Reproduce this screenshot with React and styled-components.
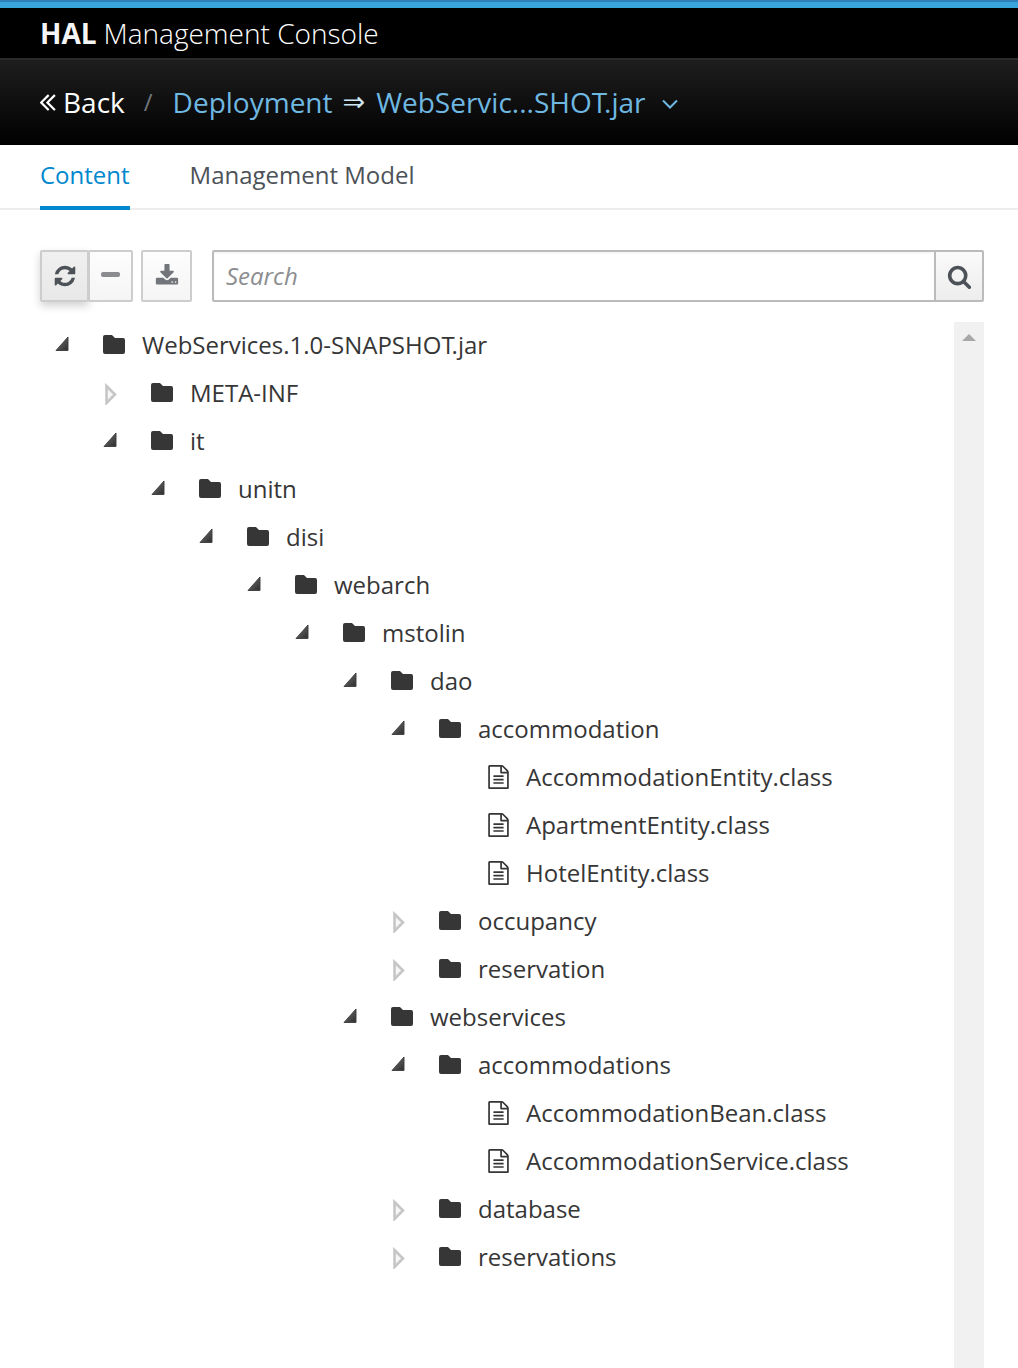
import React from "react";
import styled, { createGlobalStyle } from "styled-components";

const tree = [
  { level: 0, label: "WebServices.1.0-SNAPSHOT.jar", state: "open" },
  { level: 1, label: "META-INF", state: "closed" },
  { level: 1, label: "it", state: "open" },
  { level: 2, label: "unitn", state: "open" },
  { level: 3, label: "disi", state: "open" },
  { level: 4, label: "webarch", state: "open" },
  { level: 5, label: "mstolin", state: "open" },
  { level: 6, label: "dao", state: "open" },
  { level: 7, label: "accommodation", state: "open" },
  { level: 8, label: "AccommodationEntity.class", state: "file" },
  { level: 8, label: "ApartmentEntity.class", state: "file" },
  { level: 8, label: "HotelEntity.class", state: "file" },
  { level: 7, label: "occupancy", state: "closed" },
  { level: 7, label: "reservation", state: "closed" },
  { level: 6, label: "webservices", state: "open" },
  { level: 7, label: "accommodations", state: "open" },
  { level: 8, label: "AccommodationBean.class", state: "file" },
  { level: 8, label: "AccommodationService.class", state: "file" },
  { level: 7, label: "database", state: "closed" },
  { level: 7, label: "reservations", state: "closed" },
];

const GlobalStyle = createGlobalStyle`
  html, body {
    margin: 0;
    padding: 0;
    background: #fff;
    font-family: "Open Sans", sans-serif;
  }
`;

const Page = styled.div`
  height: 1368px;
  overflow: hidden;
  display: flex;
  flex-direction: column;
`;

const Masthead = styled.header`
  height: 50px;
  background: #000;
  border-top: 2px solid #2f7fb8;
  box-shadow: inset 0 6px 0 #39a5dc;
  padding: 6px 0 0 40px;
  display: flex;
  align-items: center;
  color: #fff;
  font-size: 28px;
  font-weight: 300;
  flex: none;
`;

const Brand = styled.b`
  font-weight: 700;
  margin-right: 7px;
  color: #f5f5f5;
`;

const Breadcrumb = styled.nav`
  height: 83px;
  border-top: 2px solid #2b2b2b;
  background: linear-gradient(#1e1e1e, #000);
  padding: 0 0 2px 40px;
  display: flex;
  align-items: center;
  font-size: 28px;
  flex: none;
`;

const BackLink = styled.span`
  color: #fff;
  display: flex;
  align-items: center;
  gap: 7px;
`;

const BackIcon = styled.svg`
  width: 16px;
  height: 17px;
  margin-top: 2px;
  fill: currentColor;
`;

const Divider = styled.span`
  color: #72767b;
  margin: 0 20px 0 19px;
  font-size: 24px;
`;

const Crumb = styled.span`
  color: #6fb8e2;
  display: flex;
  align-items: center;
`;

const Arrow = styled.span`
  margin: 0 11px 0 10px;
  font-family: "DejaVu Sans", sans-serif;
  font-size: 27px;
  color: #cfe6f4;
`;

// the installed Open Sans doesn't pull "T." together like the original
const Tight = styled.span`
  letter-spacing: -3px;
`;

const Caret = styled.svg`
  width: 18px;
  height: 10px;
  margin: 4px 0 0 15px;
  fill: none;
  stroke: currentColor;
  stroke-width: 2;
`;

const Tabs = styled.div`
  height: 63px;
  border-bottom: 2px solid #ededed;
  padding-left: 40px;
  display: flex;
  gap: 60px;
  font-size: 24px;
  flex: none;
`;

const Tab = styled.span`
  color: ${(p) => (p.$active ? "#0088ce" : "#4d5258")};
  height: 65px;
  line-height: 59px;
  box-sizing: border-box;
  border-bottom: ${(p) => (p.$active ? "4px solid #0088ce" : "none")};
`;

const Toolbar = styled.div`
  margin-top: 40px;
  padding: 0 34px 0 40px;
  display: flex;
  flex: none;
  height: 52px;
`;

const ToolButton = styled.button`
  box-sizing: border-box;
  height: 52px;
  width: ${(p) => p.$width}px;
  margin-left: ${(p) => p.$gap || 0}px;
  padding: 0;
  border: 2px solid #cdcdcd;
  border-radius: 2px;
  color: ${(p) => (p.$muted ? "#72767b" : "#4d5258")};
  display: flex;
  align-items: center;
  justify-content: center;
  background: ${(p) => (p.$pressed ? "linear-gradient(#f0f0f0, #e8e8e8)" : "linear-gradient(#fdfdfd, #f5f5f5)")};
  box-shadow: ${(p) => (p.$pressed ? "0 4px 8px rgba(0, 0, 0, 0.18)" : "none")};
`;

const Glyph = styled.svg`
  width: ${(p) => p.$size || 24}px;
  height: ${(p) => p.$size || 24}px;
  fill: currentColor;
`;

const MinusBar = styled.span`
  width: 19px;
  height: 5px;
  margin: 0 1px 4px 0;
  border-radius: 2px;
  background: #8a8c8f;
`;

const SearchBox = styled.div`
  flex: 1;
  margin-left: 20px;
  display: flex;
  box-sizing: border-box;
  border: 2px solid #bbb;
  border-radius: 2px;
  height: 52px;
`;

const SearchInput = styled.div`
  flex: 1;
  padding-left: 12px;
  line-height: 48px;
  font-size: 24px;
  font-style: italic;
  color: #8b8d8f;
  box-shadow: inset 0 2px 2px rgba(0, 0, 0, 0.03);
`;

const SearchButton = styled.div`
  width: 46px;
  border-left: 2px solid #bbb;
  background: linear-gradient(#fafafa, #ededed);
  display: flex;
  align-items: center;
  justify-content: center;
  color: #4d5258;
`;

const Body = styled.div`
  margin-top: 20px;
  padding: 0 34px 0 40px;
  display: flex;
  flex: 1;
  min-height: 0;
`;

const Tree = styled.ul`
  flex: 1;
  list-style: none;
  margin: -2px 0 0;
  padding: 0;
`;

const Row = styled.li`
  height: 48px;
  display: flex;
  align-items: center;
  padding-left: ${(p) => p.$level * 48}px;
  color: #363636;
  font-size: 24px;
  white-space: nowrap;
`;

const Toggle = styled.span`
  width: 48px;
  height: 48px;
  display: flex;
  align-items: center;
  justify-content: flex-start;
  flex: none;
`;

const NodeIcon = styled.span`
  width: 54px;
  height: 48px;
  padding-left: 15px;
  box-sizing: border-box;
  display: flex;
  align-items: center;
  color: #363636;
  flex: none;
`;

const FolderSvg = styled.svg`
  width: 22px;
  height: 19px;
  fill: currentColor;
`;

const FileSvg = styled.svg`
  width: 21px;
  height: 24px;
  margin: 1px 0 0 1px;
  fill: currentColor;
`;

const OpenSvg = styled.svg`
  width: 30px;
  height: 16px;
`;

const ClosedSvg = styled.svg`
  width: 30px;
  height: 22px;
  margin-top: 3px;
`;

const Scrollbar = styled.div`
  width: 30px;
  background: #f1f1f1;
  display: flex;
  justify-content: center;
  padding-top: 12px;
  box-sizing: border-box;
`;

const ScrollUp = styled.span`
  width: 0;
  height: 0;
  border-left: 7px solid transparent;
  border-right: 7px solid transparent;
  border-bottom: 7px solid #a8a8a8;
`;

const OpenArrow = () => (
  <OpenSvg viewBox="0 0 30 16">
    <defs>
      <linearGradient id="open-arrow" x1="0" y1="0" x2="1" y2="1">
        <stop offset="0" stopColor="#777" />
        <stop offset="1" stopColor="#2c2c2c" />
      </linearGradient>
    </defs>
    <path d="M28 1 V14.5 H16 Z" fill="url(#open-arrow)" stroke="#444" strokeWidth="1" />
  </OpenSvg>
);

const ClosedArrow = () => (
  <ClosedSvg viewBox="0 0 30 22">
    <path d="M18.5 3 L27 11.5 L18.5 20 Z" fill="#f6f6f6" stroke="#c6c6c6" strokeWidth="2.6" />
  </ClosedSvg>
);

const FolderIcon = () => (
  <FolderSvg viewBox="0 0 22 19">
    <path d="M2 0h6c1 0 2 .6 2.5 1.5L12 3h8a2 2 0 0 1 2 2v12a2 2 0 0 1-2 2H2a2 2 0 0 1-2-2V2a2 2 0 0 1 2-2z" />
  </FolderSvg>
);

const FileIcon = () => (
  <FileSvg viewBox="128 0 1536 1792">
    <path d="M1596 380q28 28 48 76t20 88v1152q0 40-28 68t-68 28h-1344q-40 0-68-28t-28-68v-1600q0-40 28-68t68-28h896q40 0 88 20t76 48zm-444-244v376h376q-10-29-22-41l-313-313q-12-12-41-22zm384 1528v-1024h-416q-40 0-68-28t-28-68v-416h-768v1536h1280zm-1024-864q0-14 9-23t23-9h704q14 0 23 9t9 23v64q0 14-9 23t-23 9h-704q-14 0-23-9t-9-23v-64zm736 224q14 0 23 9t9 23v64q0 14-9 23t-23 9h-704q-14 0-23-9t-9-23v-64q0-14 9-23t23-9h704zm0 256q14 0 23 9t9 23v64q0 14-9 23t-23 9h-704q-14 0-23-9t-9-23v-64q0-14 9-23t23-9h704z" />
  </FileSvg>
);

const Label = ({ text }) => {
  const at = text.indexOf("T.");
  if (at < 0) return <span>{text}</span>;
  return (
    <span>
      {text.slice(0, at)}
      <Tight>T</Tight>
      {text.slice(at + 1)}
    </span>
  );
};

const TreeRow = ({ node }) => (
  <Row $level={node.level}>
    <Toggle>
      {node.state === "open" && <OpenArrow />}
      {node.state === "closed" && <ClosedArrow />}
    </Toggle>
    <NodeIcon>{node.state === "file" ? <FileIcon /> : <FolderIcon />}</NodeIcon>
    <Label text={node.label} />
  </Row>
);

const App = () => (
  <Page>
    <GlobalStyle />
    <Masthead>
      <Brand>HAL</Brand> Management Console
    </Masthead>
    <Breadcrumb>
      <BackLink>
        <BackIcon viewBox="60 500 980 1010">
          <path d="M627 1427q0 13-10 23l-50 50q-10 10-23 10t-23-10l-466-466q-10-10-10-23t10-23l466-466q10-10 23-10t23 10l50 50q10 10 10 23t-10 23l-393 393 393 393q10 10 10 23zm384 0q0 13-10 23l-50 50q-10 10-23 10t-23-10l-466-466q-10-10-10-23t10-23l466-466q10-10 23-10t23 10l50 50q10 10 10 23t-10 23l-393 393 393 393q10 10 10 23z" />
        </BackIcon>
        Back
      </BackLink>
      <Divider>/</Divider>
      <Crumb>
        Deployment
        <Arrow>⇒</Arrow>
        <Label text="WebServic...SHOT.jar" />
        <Caret viewBox="0 0 18 10">
          <path d="M2 1.5 L9 8.5 L16 1.5" />
        </Caret>
      </Crumb>
    </Breadcrumb>
    <Tabs>
      <Tab $active>Content</Tab>
      <Tab>Management Model</Tab>
    </Tabs>
    <Toolbar>
      <ToolButton $width={49} $pressed>
        <Glyph viewBox="0 0 1792 1792">
          <path d="M1639 1056q0 5-1 7-64 268-268 434.5t-478 166.5q-146 0-282.5-55t-243.5-157l-129 129q-19 19-45 19t-45-19-19-45v-448q0-26 19-45t45-19h448q26 0 45 19t19 45-19 45l-137 137q71 66 161 102t187 36q134 0 250-65t186-179q11-17 53-117 8-23 30-23h192q13 0 22.5 9.5t9.5 22.5zm25-800v448q0 26-19 45t-45 19h-448q-26 0-45-19t-19-45 19-45l138-138q-148-137-349-137-134 0-250 65t-186 179q-11 17-53 117-8 23-30 23h-199q-13 0-22.5-9.5t-9.5-22.5v-7q65-268 270-434.5t480-166.5q146 0 284 55.5t245 156.5l130-129q19-19 45-19t45 19 19 45z" />
        </Glyph>
      </ToolButton>
      <ToolButton $width={45} $gap={-1}>
        <MinusBar />
      </ToolButton>
      <ToolButton $width={51} $gap={8} $muted>
        <Glyph viewBox="0 0 1792 1792">
          <path d="M1344 1344q0-26-19-45t-45-19-45 19-19 45 19 45 45 19 45-19 19-45zm256 0q0-26-19-45t-45-19-45 19-19 45 19 45 45 19 45-19 19-45zm128-224v320q0 40-28 68t-68 28h-1472q-40 0-68-28t-28-68v-320q0-40 28-68t68-28h465l135 136q58 56 136 56t136-56l136-136h464q40 0 68 28t28 68zm-325-569q17 41-14 70l-448 448q-18 19-45 19t-45-19l-448-448q-31-29-14-70 17-39 59-39h256v-448q0-26 19-45t45-19h256q26 0 45 19t19 45v448h256q42 0 59 39z" />
        </Glyph>
      </ToolButton>
      <SearchBox>
        <SearchInput>Search</SearchInput>
        <SearchButton>
          <Glyph $size={25} viewBox="0 0 1792 1792">
            <path d="M1216 832q0-185-131.5-316.5t-316.5-131.5-316.5 131.5-131.5 316.5 131.5 316.5 316.5 131.5 316.5-131.5 131.5-316.5zm512 832q0 52-38 90t-90 38q-54 0-90-38l-343-342q-179 124-399 124-143 0-273.5-55.5t-225-150-150-225-55.5-273.5 55.5-273.5 150-225 225-150 273.5-55.5 273.5 55.5 225 150 150 225 55.5 273.5q0 220-124 399l343 343q37 37 37 90z" />
          </Glyph>
        </SearchButton>
      </SearchBox>
    </Toolbar>
    <Body>
      <Tree>
        {tree.map((node) => (
          <TreeRow key={`${node.level}-${node.label}`} node={node} />
        ))}
      </Tree>
      <Scrollbar>
        <ScrollUp />
      </Scrollbar>
    </Body>
  </Page>
);

export default App;
